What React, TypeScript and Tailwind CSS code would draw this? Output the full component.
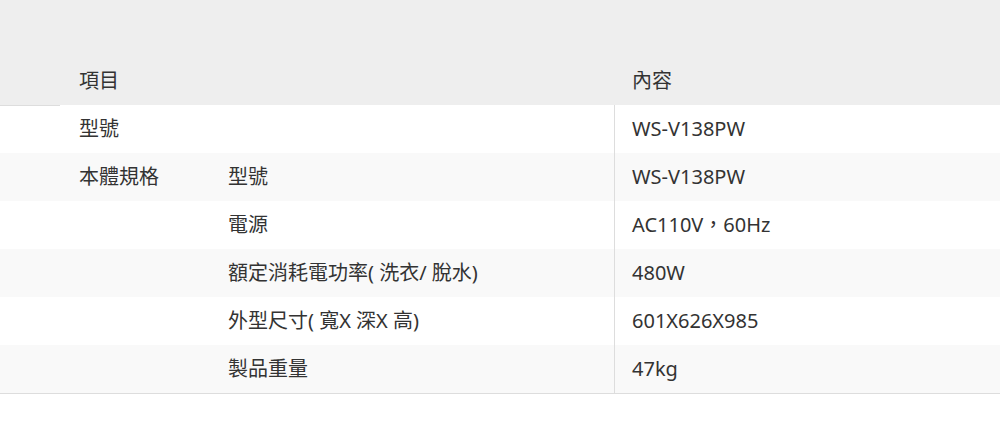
const rows: { a: string; b: string; c: string }[] = [
  { a: "型號", b: "", c: "WS-V138PW" },
  { a: "本體規格", b: "型號", c: "WS-V138PW" },
  { a: "", b: "電源", c: "AC110V，60Hz" },
  { a: "", b: "額定消耗電功率( 洗衣/ 脫水)", c: "480W" },
  { a: "", b: "外型尺寸( 寬X 深X 高)", c: "601X626X985" },
  { a: "", b: "製品重量", c: "47kg" },
];

export default function App() {
  return (
    <div
      className="w-[1000px] h-[445px] bg-white text-[20px] text-[#333]"
      style={{ fontFamily: '"Noto Sans", "Noto Sans CJK TC", sans-serif' }}
    >
      {/* 表頭 */}
      <div className="h-[105px] bg-[#eeeeee] grid grid-cols-[614px_1fr] items-end">
        <div className="h-12 flex items-center pl-[79px]">項目</div>
        <div className="h-12 flex items-center pl-[18px]">內容</div>
      </div>

      {/* 表身 */}
      <div className="border-b border-[#dddddd]">
        {rows.map((r, i) => (
          <div
            key={i}
            className={`relative h-12 grid grid-cols-[228px_386px_1fr] ${
              i % 2 === 1 ? "bg-[#f9f9f9]" : "bg-white"
            } ${i === 0 ? "before:absolute before:left-0 before:top-0 before:w-[60px] before:h-px before:bg-[#dddddd]" : ""}`}
          >
            <div className="flex items-center pl-[79px]">{r.a}</div>
            <div className="flex items-center">{r.b}</div>
            <div className="flex items-center pl-[17px] border-l border-[#dddddd]">{r.c}</div>
          </div>
        ))}
      </div>
    </div>
  );
}
